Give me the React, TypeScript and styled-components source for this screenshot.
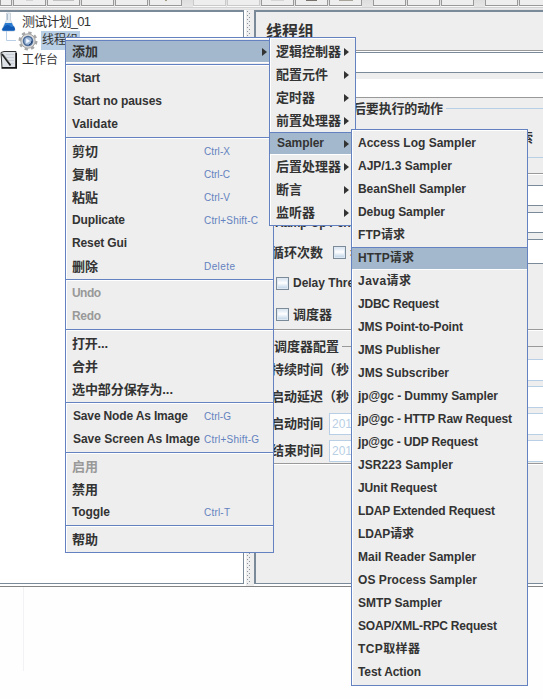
import React, { useLayoutEffect, useRef, useState } from "react";
import styled, { createGlobalStyle, css } from "styled-components";

const steel = "#7a8a99";
const blue = "#6382bf";
const pale = "#b8cfe5";
const face = "#eeeeee";
const ink = "#333333";

const Global = createGlobalStyle`
  * { box-sizing: border-box; }
  body { margin: 0; background: #fefefe; overflow: hidden; }
`;

const Screen = styled.div`
  position: relative;
  width: 543px;
  height: 699px;
  overflow: hidden;
  background: #fefefe;
  color: ${ink};
  font: bold 12px/23px "Liberation Sans", "Noto Sans CJK SC", sans-serif;
  white-space: nowrap;
`;

/* ---------- fitted text ---------- */

const FitText = styled.span<{ $cjk: boolean }>`
  justify-self: start;
  font-size: ${(p) => (p.$cjk ? "13px" : "12px")};
  white-space: pre;
`;

function Fit({ text, width }: { text: string; width?: number }) {
  const ref = useRef<HTMLSpanElement>(null);
  const [gap, setGap] = useState(0);
  useLayoutEffect(() => {
    if (ref.current && width) {
      const natural = ref.current.getBoundingClientRect().width;
      setGap((width - natural) / (text.length - 1));
    }
  }, []);
  return (
    <FitText ref={ref} $cjk={text.charCodeAt(0) > 255} style={{ letterSpacing: gap }}>
      {text}
    </FitText>
  );
}

/* ---------- toolbar ---------- */

const Toolbar = styled.div`
  display: flex;
  height: 10px;
  background: linear-gradient(#dedede, #e6e6e6 7px, #d2d2d2 7px, #d2d2d2 8px, #eee 8px, #ddd 10px);
`;

const ToolGroup = styled.div<{ $gap?: number }>`
  display: flex;
  gap: 1px;
  margin-left: ${(p) => p.$gap ?? 0}px;
`;

const ToolButton = styled.div<{ $w?: number; $dim?: boolean }>`
  display: flex;
  justify-content: center;
  width: ${(p) => p.$w ?? 33}px;
  height: 6px;
  background: ${face};
  border: 1px solid ${(p) => (p.$dim ? "#cacaca" : "#999")};
  border-top: 0;
  box-shadow: 0 1px 0 #fafafa;
`;

const ToolHint = styled.span<{ $w: number; $color: string }>`
  width: ${(p) => p.$w}px;
  height: 1px;
  background: ${(p) => p.$color};
`;

/* ---------- frame ---------- */

const Main = styled.div`
  display: grid;
  grid-template-columns: 244px 10px 1fr;
  grid-template-rows: 574px;
  height: 574px;
`;

const Tree = styled.div`
  background: #fff;
  border: solid ${steel};
  border-width: 2px 1px 1px 0;
  font-weight: normal;
`;

const Node = styled.div<{ $h: number; $indent?: number }>`
  display: flex;
  align-items: center;
  height: ${(p) => p.$h}px;
  padding-left: ${(p) => p.$indent ?? 0}px;
`;

const NodeText = styled.span<{ $selected?: boolean }>`
  height: 19px;
  line-height: 19px;
  padding: 0 2px 0 1px;
  margin-left: 3px;
  background: ${(p) => (p.$selected ? pale : "none")};
`;

const Splitter = styled.div`
  display: flex;
  justify-content: center;
  background: linear-gradient(90deg, #fff 2px, ${face} 2px);
  height: 576px;
`;

const Panel = styled.div`
  position: relative;
  background: ${face};
  border: solid ${steel};
  border-width: 2px 0 1px 2px;
  overflow: hidden;
`;

const Below = styled.div`
  height: 113px;
  margin-top: 2px;
  border-top: 1px solid #848484;
`;

const FaintRule = styled.div`
  width: 1px;
  height: 84px;
  margin-left: 23px;
  background: #f2f2f4;
`;

const Heading = styled.div`
  height: 40px;
  padding: 1px 0 0 10px;
  line-height: 38px;
  font-size: 16px;
  border-bottom: 1px solid #fff;
  box-shadow: inset 0 -1px 0 #999;
`;

const Field = styled.div<{ $h: number; $gap?: number }>`
  height: ${(p) => p.$h}px;
  margin-top: ${(p) => p.$gap ?? 0}px;
  margin-left: 100px;
  background: #fff;
  border: solid ${steel};
  border-width: 1px 0;
`;

const NoteField = styled.div`
  height: 19px;
  margin: 6px 0 0 100px;
  background: #fff;
  border-bottom: 1px solid #999;
`;

const Group = styled.div<{ $gap?: number; $pad?: number; $tone?: string }>`
  display: flex;
  align-items: center;
  height: 21px;
  margin-top: ${(p) => p.$gap ?? 0}px;
  padding-left: ${(p) => p.$pad ?? 0}px;
  &::after {
    content: "";
    flex: 1;
    height: 1px;
    margin-left: 3px;
    background: ${(p) => p.$tone ?? "#999"};
  }
`;

const Choice = styled.div`
  height: 39px;
  line-height: 38px;
  padding-left: 264px;
  border-bottom: 1px solid ${pale};
`;

const Etch = styled.div<{ $gap: number }>`
  height: 2px;
  margin-top: ${(p) => p.$gap}px;
  background: linear-gradient(#999 50%, #fff 50%);
`;

/* Labels share the band occupied by the stacked value fields. */
const LabelColumn = styled.div`
  position: absolute;
  top: 201px;
  left: 15px;
`;

const Line = styled.div<{ $h: number; $indent?: number }>`
  display: flex;
  align-items: center;
  height: ${(p) => p.$h}px;
  padding-left: ${(p) => p.$indent ?? 0}px;
`;

const Check = styled.span<{ $left?: number }>`
  width: 13px;
  height: 13px;
  margin: 0 4px 0 ${(p) => p.$left ?? 0}px;
  border: 1px solid ${steel};
  background: linear-gradient(#d4e1ef, #fff 45%, #b8cfe5);
  box-shadow: inset 0 0 0 1px #dde8f3;
`;

const Schedule = styled.div`
  padding-top: 1px;
`;

const DateRow = styled.div`
  display: grid;
  grid-template-columns: 58px 1fr;
  align-items: center;
  height: 22px;
  margin-bottom: 5px;
  padding-left: 15px;
`;

const DateField = styled.div<{ $plain?: boolean }>`
  height: 22px;
  margin-left: ${(p) => (p.$plain ? 22 : 0)}px;
  padding-left: 2px;
  line-height: 20px;
  font-weight: normal;
  color: ${pale};
  background: #fff;
  border: 1px solid ${pale};
  border-right: 0;
`;

const ParenRow = styled(DateRow)`
  grid-template-columns: 78px 1fr;
`;

/* ---------- menus ---------- */

const Menu = styled.div<{ $x: number; $y: number; $w: number }>`
  position: absolute;
  left: ${(p) => p.$x}px;
  top: ${(p) => p.$y}px;
  width: ${(p) => p.$w}px;
  padding: 2px 0 1px;
  background: ${face};
  border: 1px solid ${blue};
  box-shadow: inset 1px 1px 0 #fff;
`;

const Item = styled.div<{ $active?: boolean; $disabled?: boolean; $nudge?: boolean }>`
  display: flex;
  align-items: center;
  position: relative;
  height: 23px;
  padding-left: ${(p) => (p.$nudge ? 7 : 6)}px;
  color: ${(p) => (p.$disabled ? "#999" : ink)};
  ${(p) =>
    p.$active &&
    css`
      background: #a3b8cc;
      border-top: 1px solid ${blue};
      border-bottom: 1px solid #fff;
    `}
`;

const Separator = styled.div`
  height: 4px;
  padding-top: 1px;
  &::before {
    content: "";
    display: block;
    height: 2px;
    background: linear-gradient(${blue} 50%, #fff 50%);
  }
`;

const Shortcut = styled.span`
  position: absolute;
  left: 138px;
  color: ${blue};
  font-size: 10px;
  font-weight: normal;
  & > span { font-size: 10px; }
`;

const Arrow = styled.span`
  position: absolute;
  right: 6px;
  border-left: 5px solid ${ink};
  border-top: 4.5px solid transparent;
  border-bottom: 4.5px solid transparent;
`;

type Entry = { t: string; w?: number; key?: string; kw?: number; off?: boolean; sub?: boolean; nudge?: boolean } | null;

const mainMenu: Entry[] = [
  { t: "添加", sub: true },
  null,
  { t: "Start", w: 27, nudge: true },
  { t: "Start no pauses", w: 89, nudge: true },
  { t: "Validate", w: 46 },
  null,
  { t: "剪切", key: "Ctrl-X", kw: 26 },
  { t: "复制", key: "Ctrl-C", kw: 26 },
  { t: "粘贴", key: "Ctrl-V", kw: 26 },
  { t: "Duplicate", w: 53, key: "Ctrl+Shift-C", kw: 54 },
  { t: "Reset Gui", w: 55 },
  { t: "删除", key: "Delete", kw: 31 },
  null,
  { t: "Undo", w: 29, off: true },
  { t: "Redo", w: 29, off: true },
  null,
  { t: "打开...", w: 36 },
  { t: "合并" },
  { t: "选中部分保存为...", w: 101 },
  null,
  { t: "Save Node As Image", w: 115, nudge: true, key: "Ctrl-G", kw: 27 },
  { t: "Save Screen As Image", w: 127, nudge: true, key: "Ctrl+Shift-G", kw: 55 },
  null,
  { t: "启用", off: true },
  { t: "禁用" },
  { t: "Toggle", w: 38, key: "Ctrl-T", kw: 26 },
  null,
  { t: "帮助" },
];

const addMenu = ["逻辑控制器", "配置元件", "定时器", "前置处理器", "Sampler", "后置处理器", "断言", "监听器"];

const samplers: [string, number][] = [
  ["Access Log Sampler", 118],
  ["AJP/1.3 Sampler", 94],
  ["BeanShell Sampler", 108],
  ["Debug Sampler", 87],
  ["FTP请求", 47],
  ["HTTP请求", 56],
  ["Java请求", 53],
  ["JDBC Request", 81],
  ["JMS Point-to-Point", 105],
  ["JMS Publisher", 82],
  ["JMS Subscriber", 91],
  ["jp@gc - Dummy Sampler", 140],
  ["jp@gc - HTTP Raw Request", 154],
  ["jp@gc - UDP Request", 120],
  ["JSR223 Sampler", 95],
  ["JUnit Request", 79],
  ["LDAP Extended Request", 137],
  ["LDAP请求", 56],
  ["Mail Reader Sampler", 118],
  ["OS Process Sampler", 119],
  ["SMTP Sampler", 84],
  ["SOAP/XML-RPC Request", 139],
  ["TCP取样器", 62],
  ["Test Action", 63],
];

/* ---------- icons ---------- */

const Flask = () => (
  <svg width="18" height="20" viewBox="0 0 18 20">
    <path d="M6.500 1h4v7l4.500 9.500q.3 1.500-1.500 1.500h-10Q1.700 19 2 17.500L6.500 8z" fill="#e3ebf2" stroke="#c0ccd8" strokeWidth=".8" />
    <path d="M5.200 11h6.600l3 6.400q0 1.300-1.300 1.300h-10q-1.400 0-1.300-1.300z" fill="#2b7bd0" />
    <path d="M5 14q3-2 5 0t4 0l1 3q0 1.500-1.500 1.500h-10Q2 18.500 2.300 17z" fill="#1059b4" />
    <path d="M7.500 2v6" stroke="#aebccb" />
  </svg>
);

const Gear = () => (
  <svg width="20" height="20" viewBox="0 0 20 20">
    <circle cx="10" cy="10" r="8" fill="none" stroke="#a6a6a6" strokeWidth="3" strokeDasharray="3.200 3.080" />
    <circle cx="10" cy="10" r="7.200" fill="#d9d9d9" stroke="#a5a5a5" />
    <circle cx="10" cy="10" r="4.500" fill="#9db7d9" stroke="#4c6b97" strokeWidth="1.600" />
    <path d="M8.200 7.500l4 2.500-4 2.500z" fill="#f2f7ff" />
    <path d="M11 13.800q3-1 3-4" stroke="#1e3f70" fill="none" />
  </svg>
);

const Notebook = () => (
  <svg width="18" height="20" viewBox="0 0 18 20">
    <path d="M1 2.500L4 1.500h12v16H2z" fill="#dfe2e6" stroke="#333" />
    <path d="M1.500 18h14.700V3" stroke="#111" strokeWidth="1.600" fill="none" />
    <path d="M6 4.500h8M6 7.500h8M7 10.500h7M8 13.500h6" stroke="#c3c8d0" strokeWidth=".8" />
    <path d="M2 4l8.500 11.500" stroke="#222" strokeWidth="1.800" />
    <path d="M4 5l5 7" stroke="#888" strokeWidth=".6" />
  </svg>
);

const Connector = styled.svg`
  margin-right: 2px;
`;

const Dots = () => (
  <svg width="6" height="574">
    <defs>
      <pattern id="grip" width="4" height="4" patternUnits="userSpaceOnUse">
        <rect x="1" y="1" width="1" height="1" fill="#8a96a2" />
        <rect x="3" y="3" width="1" height="1" fill="#8a96a2" />
      </pattern>
    </defs>
    <rect x="0" y="0" width="4" height="574" fill="url(#grip)" />
  </svg>
);

export default function App() {
  return (
    <Screen>
      <Global />
      <Toolbar>
        <ToolGroup>
          <ToolButton $w={12} />
          <ToolButton><ToolHint $w={7} $color="#d4d4d4" /></ToolButton>
          <ToolButton><ToolHint $w={21} $color="#c2c2c2" /></ToolButton>
          <ToolButton />
          <ToolButton />
          <ToolButton><ToolHint $w={2} $color="#a29b80" /></ToolButton>
        </ToolGroup>
        <ToolGroup $gap={11}>
          <ToolButton $dim />
          <ToolButton $dim />
          <ToolButton><ToolHint $w={13} $color="#d5d5d5" /></ToolButton>
          <ToolButton><ToolHint $w={11} $color="#77736c" /></ToolButton>
          <ToolButton><ToolHint $w={14} $color="#aaa59b" /></ToolButton>
        </ToolGroup>
        <ToolGroup $gap={11}>
          <ToolButton />
          <ToolButton />
          <ToolButton />
        </ToolGroup>
        <ToolGroup $gap={11}>
          <ToolButton />
          <ToolButton />
        </ToolGroup>
      </Toolbar>

      <Main>
        <Tree>
          <Node $h={19}>
            <Flask />
            <NodeText><Fit text="测试计划_01" width={69} /></NodeText>
          </Node>
          <Node $h={19} $indent={6}>
            <Connector width="10" height="19">
              <path d="M.5 0v9.500H10" fill="none" stroke={pale} />
            </Connector>
            <Gear />
            <NodeText $selected>线程组</NodeText>
          </Node>
          <Node $h={20}>
            <Notebook />
            <NodeText>工作台</NodeText>
          </Node>
        </Tree>
        <Splitter><Dots /></Splitter>
        <Panel>
          <Heading>线程组</Heading>
          <Field $h={21} />
          <NoteField />
          <Group $pad={97} $tone={pale}><Fit text="后要执行的动作" width={90} /></Group>
          <Choice><Fit text="索" /></Choice>
          <Etch $gap={15} />
          <Field $h={21} $gap={10} />
          <Field $h={21} $gap={6} />
          <Field $h={25} $gap={6} />
          <Etch $gap={65} />
          <Group $gap={5} $pad={18}><Fit text="调度器配置" width={65} /></Group>
          <Schedule>
            <ParenRow><Fit text="持续时间（秒" width={78} /><DateField $plain /></ParenRow>
            <ParenRow><Fit text="启动延迟（秒" width={78} /><DateField $plain /></ParenRow>
            <DateRow><Fit text="启动时间" width={52} /><DateField>2017</DateField></DateRow>
            <DateRow><Fit text="结束时间" width={52} /><DateField>2017</DateField></DateRow>
          </Schedule>
          <Etch $gap={-3} />
          <LabelColumn>
            <Line $h={20} $indent={4}><Fit text="Ramp-Up Period" width={90} /></Line>
            <Line $h={39}>
              <Fit text="循环次数" width={52} />
              <Check $left={10} />
              永远
            </Line>
            <Line $h={22} $indent={5}><Check /><Fit text="Delay Thread" width={75} /></Line>
            <Line $h={40} $indent={5}><Check /><Fit text="调度器" width={39} /></Line>
          </LabelColumn>
        </Panel>
      </Main>
      <Below><FaintRule /></Below>

      <Menu $x={65} $y={37} $w={209}>
        {mainMenu.map((e, i) =>
          e ? (
            <Item key={i} $active={e.sub} $disabled={e.off} $nudge={e.nudge}>
              <Fit text={e.t} width={e.w} />
              {e.key && <Shortcut><Fit text={e.key} width={e.kw} /></Shortcut>}
              {e.sub && <Arrow />}
            </Item>
          ) : (
            <Separator key={i} />
          )
        )}
      </Menu>
      <Menu $x={269} $y={37} $w={87}>
        {addMenu.map((t) => (
          <Item key={t} $active={t === "Sampler"} $nudge={t === "Sampler"}>
            <Fit text={t} width={t === "Sampler" ? 47 : undefined} />
            <Arrow />
          </Item>
        ))}
      </Menu>
      <Menu $x={351} $y={129} $w={177}>
        {samplers.map(([t, w]) => (
          <Item key={t} $active={t === "HTTP请求"}>
            <Fit text={t} width={w} />
          </Item>
        ))}
      </Menu>
    </Screen>
  );
}
